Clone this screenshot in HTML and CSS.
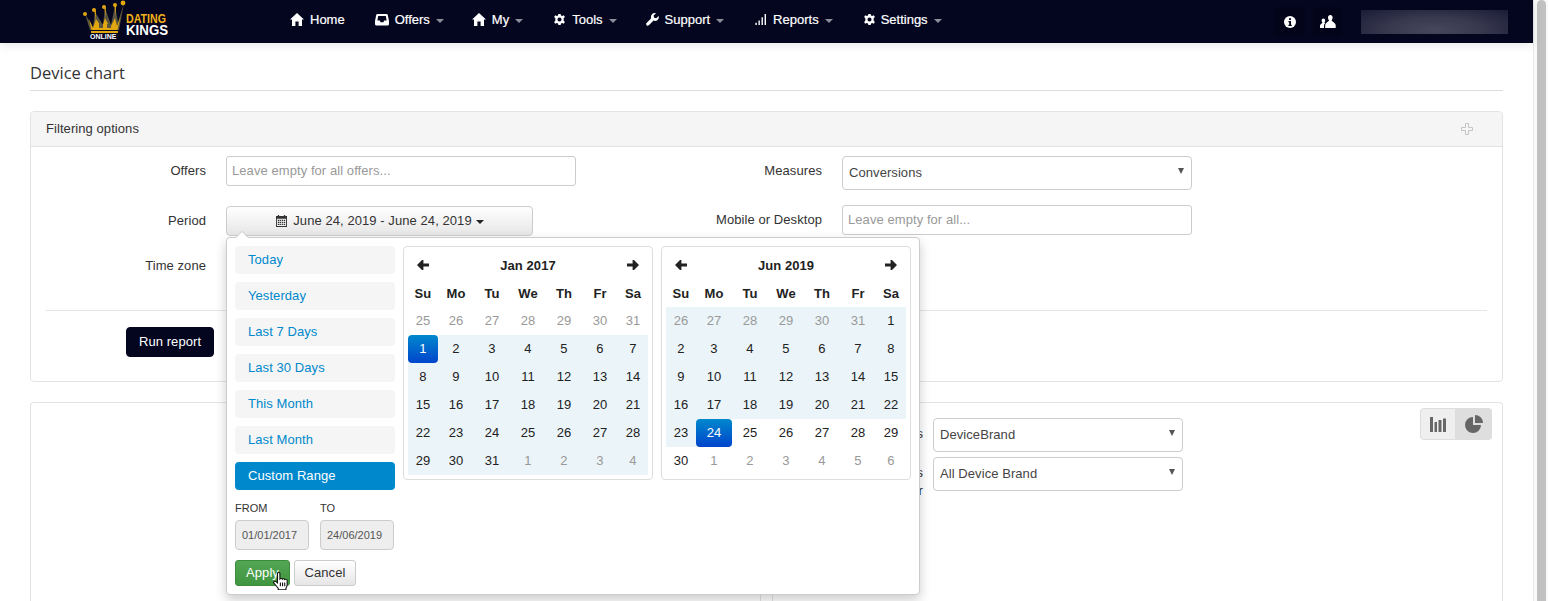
FILE: index.html
```html
<!DOCTYPE html>
<html lang="en">
<head>
<meta charset="utf-8">
<title>Device chart</title>
<link rel="stylesheet" href="styles.css">
</head>
<body>
<div class="window">
  <div class="main">
    <nav class="navbar">
      <a class="brand" href="#">
        <svg class="logo" viewBox="0 0 90 42" width="90" height="42">
          <path class="crown-dark" d="M3 14 L11 27 L13 12 L21 25 L23 8 L29 25 L33 6 L36 22 L42 3 L37 30 L8 30 Z"/>
          <path class="crown-gold" d="M7 19 L11 28 L14 19 L20 28 L23 18 L28 28 L33 18 L35 26 L38.5 17 L35.5 30 H9.5 Z"/>
          <path class="crown-dark" d="M17 24 H21 V28 H17 Z M25 24 H29 V28 H25 Z"/>
          <path class="crown-gold" d="M12.5 11 L14 11 L13.5 20 Z M22.4 8 L23.8 8 L23.4 17 Z M32.5 6 L34 6 L33.5 16 Z"/>
          <rect class="crown-gold" x="9" y="31" width="27" height="2"/>
          <circle class="crown-gold" cx="3" cy="14" r="2"/>
          <circle class="crown-gold" cx="12" cy="10" r="2"/>
          <circle class="crown-gold" cx="22" cy="7" r="2"/>
          <circle class="crown-gold" cx="33" cy="5" r="2"/>
          <circle class="crown-gold" cx="41" cy="3" r="2.4"/>
          <text class="logo-online" x="8" y="39">ONLINE</text>
          <text class="logo-dating" transform="translate(44 23) scale(.82 1)">DATING</text>
          <text class="logo-kings" transform="translate(44 35) scale(.95 1)">KINGS</text>
        </svg>
      </a>
      <ul class="menu">
        <li class="menu-item"><svg class="nav-icon" viewBox="0 0 14 13"><path d="M7 0 L14 6.6 L12 6.6 L12 13 L8.6 13 L8.6 8.5 L5.4 8.5 L5.4 13 L2 13 L2 6.6 L0 6.6 Z"/></svg>Home</li>
        <li class="menu-item"><svg class="nav-icon" viewBox="0 0 14 13"><path fill-rule="evenodd" d="M2.5 1 H11.5 Q12.5 1 12.8 2 L14 8 V11 Q14 12.5 12.5 12.5 H1.5 Q0 12.5 0 11 V8 L1.2 2 Q1.5 1 2.5 1 Z M3.2 3 L2.4 7.6 H4.8 L5.6 9.2 H8.4 L9.2 7.6 H11.6 L10.8 3 Z"/></svg>Offers<span class="caret"></span></li>
        <li class="menu-item menu-my"><svg class="nav-icon" viewBox="0 0 14 13"><path d="M7 0 L14 6.6 L12 6.6 L12 13 L8.6 13 L8.6 8.5 L5.4 8.5 L5.4 13 L2 13 L2 6.6 L0 6.6 Z"/></svg>My<span class="caret"></span></li>
        <li class="menu-item"><svg class="nav-icon nav-icon-19" viewBox="0 0 14 14"><path fill-rule="evenodd" d="M5.8 1 H8.2 L8.6 2.7 L10 3.3 L11.6 2.4 L12.8 4.4 L11.5 5.6 V8.4 L12.8 9.6 L11.6 11.6 L10 10.7 L8.6 11.3 L8.2 13 H5.8 L5.4 11.3 L4 10.7 L2.4 11.6 L1.2 9.6 L2.5 8.4 V5.6 L1.2 4.4 L2.4 2.4 L4 3.3 L5.4 2.7 Z M7 4.8 A2.2 2.2 0 1 0 7 9.2 A2.2 2.2 0 1 0 7 4.8 Z"/></svg>Tools<span class="caret"></span></li>
        <li class="menu-item menu-support"><svg class="nav-icon nav-icon-19" viewBox="0 0 14 14"><path d="M13.6 3.2 L11 5.6 L8.8 5 L8.2 2.8 L10.8 0.4 A4 4 0 0 0 5.6 5.6 L0.6 10.8 A1.7 1.7 0 0 0 3 13.2 L8.2 8.2 A4 4 0 0 0 13.6 3.2 Z"/></svg>Support<span class="caret"></span></li>
        <li class="menu-item"><svg class="nav-icon nav-icon-19" viewBox="0 0 14 14"><path d="M1.5 10.5 H3 V13 H1.5 Z M4.8 8 H6.3 V13 H4.8 Z M8.1 4.5 H9.6 V13 H8.1 Z M11.4 1 H12.9 V13 H11.4 Z"/></svg>Reports<span class="caret"></span></li>
        <li class="menu-item"><svg class="nav-icon nav-icon-18" viewBox="0 0 14 14"><path fill-rule="evenodd" d="M5.8 1 H8.2 L8.6 2.7 L10 3.3 L11.6 2.4 L12.8 4.4 L11.5 5.6 V8.4 L12.8 9.6 L11.6 11.6 L10 10.7 L8.6 11.3 L8.2 13 H5.8 L5.4 11.3 L4 10.7 L2.4 11.6 L1.2 9.6 L2.5 8.4 V5.6 L1.2 4.4 L2.4 2.4 L4 3.3 L5.4 2.7 Z M7 4.8 A2.2 2.2 0 1 0 7 9.2 A2.2 2.2 0 1 0 7 4.8 Z"/></svg>Settings<span class="caret"></span></li>
      </ul>
      <div class="nav-tools">
        <div class="tool-btn tool-info"><svg viewBox="0 0 12 12" width="12" height="12"><circle class="ico-white" cx="6" cy="6" r="6"/><path class="ico-dark" d="M5 2.2 H7 V4 H5 Z M4.4 5 H7 V8.8 H7.8 V10 H4.4 V8.8 H5.2 V6.2 H4.4 Z"/></svg></div>
        <div class="tool-btn tool-users"><svg viewBox="0 0 16 13" width="16" height="13"><path class="ico-white" d="M10.3 0 C11.8 0 12.6 1.2 12.6 2.6 C12.6 4 12 5 11.6 5.4 C12.5 6.8 15.7 8 15.7 10 V13 H5.2 V10 C5.2 8 8.2 6.8 9.1 5.4 C8.6 5 8 4 8 2.6 C8 1.2 8.9 0 10.3 0 Z M3.4 3.4 C4.5 3.4 5.2 4.2 5.2 5.4 C5.2 6.3 4.8 7 4.4 7.4 C4.7 7.8 5 8 5.3 8.2 C4.4 8.9 4 9.6 4 10.4 V13 H0 V10.4 C0 9.2 2 8.4 2.5 7.4 C2 7 1.6 6.3 1.6 5.4 C1.6 4.2 2.3 3.4 3.4 3.4 Z"/></svg></div>
        <div class="user-box"></div>
      </div>
    </nav>

    <div class="content">
      <h1 class="page-title">Device chart</h1>

      <section class="panel filter-panel">
        <header class="panel-head">
          <span>Filtering options</span>
          <svg class="plus" viewBox="0 0 12 12" width="12" height="12"><path d="M4.5 .5 H7.5 V4.5 H11.5 V7.5 H7.5 V11.5 H4.5 V7.5 H.5 V4.5 H4.5 Z"/></svg>
        </header>
        <div class="panel-body">
          <div class="filter-grid">
            <label class="field-label">Offers</label>
            <input class="text-input" type="text" placeholder="Leave empty for all offers...">
            <label class="field-label">Measures</label>
            <div class="select-box"><span>Conversions</span><i class="select-arrow"></i></div>

            <label class="field-label field-label-low">Period</label>
            <div class="period-field">
              <button class="date-btn" type="button">
                <svg class="cal-icon" viewBox="0 0 12 12" width="11" height="12" preserveAspectRatio="none"><path fill-rule="evenodd" d="M2 0 H3.4 V1 H8.6 V0 H10 V1 H12 V12 H0 V1 H2 Z M1 3.8 V11 H11 V3.8 Z M2 4.8 H3.4 V6 H2 Z M4 4.8 H5.4 V6 H4 Z M6.2 4.8 H7.6 V6 H6.2 Z M8.4 4.8 H10 V6 H8.4 Z M2 6.8 H3.4 V8 H2 Z M4 6.8 H5.4 V8 H4 Z M6.2 6.8 H7.6 V8 H6.2 Z M8.4 6.8 H10 V8 H8.4 Z M2 8.8 H3.4 V10 H2 Z M4 8.8 H5.4 V10 H4 Z M6.2 8.8 H7.6 V10 H6.2 Z M8.4 8.8 H10 V10 H8.4 Z"/></svg>
                June 24, 2019 - June 24, 2019<span class="caret caret-dark"></span>
              </button>

              <div class="picker">
                <div class="picker-side">
                  <ul class="ranges">
                    <li class="range">Today</li>
                    <li class="range">Yesterday</li>
                    <li class="range">Last 7 Days</li>
                    <li class="range">Last 30 Days</li>
                    <li class="range">This Month</li>
                    <li class="range">Last Month</li>
                    <li class="range range-active">Custom Range</li>
                  </ul>
                  <div class="range-inputs">
                    <div class="range-input"><label>FROM</label><input type="text" value="01/01/2017" disabled></div>
                    <div class="range-input"><label>TO</label><input type="text" value="24/06/2019" disabled></div>
                  </div>
                  <div class="picker-actions">
                    <button class="btn-apply" type="button">Apply</button>
                    <button class="btn-cancel" type="button">Cancel</button>
                    <svg class="hand" viewBox="0.5 0.2 12.4 18.6" width="15" height="18" preserveAspectRatio="none"><path d="M4.2 1.6 C4.2 .4 6.2 .4 6.2 1.6 V7.4 C6.6 6.7 8 6.7 8.2 7.6 C8.6 6.9 10 7 10.2 8 C10.8 7.4 12.2 7.7 12.2 8.8 V13.4 C12.2 15 11.6 15.8 11.2 17 V18.4 H4.8 V17 C3.8 15.6 2.6 13.8 1.2 11.6 C.4 10.4 1.8 9.2 3 10.2 L4.2 11.4 Z"/><path d="M6.6 11 V15 M8.4 11 V15 M10.2 11 V15"/></svg>
                  </div>
                </div>

                <div class="calendar">
                  <div class="cal-head">
                    <svg class="cal-arrow" viewBox="0 0 12 10" width="12" height="10"><path d="M0 5 L5 0 L6.4 0 V3.4 H12 V6.6 H6.4 V10 H5 Z"/></svg>
                    <span class="cal-title">Jan 2017</span>
                    <svg class="cal-arrow" viewBox="0 0 12 10" width="12" height="10"><path d="M12 5 L7 0 L5.6 0 V3.4 H0 V6.6 H5.6 V10 H7 Z"/></svg>
                  </div>
                  <div class="cal-grid">
                    <b>Su</b><b>Mo</b><b>Tu</b><b>We</b><b>Th</b><b>Fr</b><b>Sa</b>
                    <span class="off">25</span><span class="off">26</span><span class="off">27</span><span class="off">28</span><span class="off">29</span><span class="off">30</span><span class="off">31</span>
                    <span class="sel">1</span><span class="in">2</span><span class="in">3</span><span class="in">4</span><span class="in">5</span><span class="in">6</span><span class="in">7</span>
                    <span class="in">8</span><span class="in">9</span><span class="in">10</span><span class="in">11</span><span class="in">12</span><span class="in">13</span><span class="in">14</span>
                    <span class="in">15</span><span class="in">16</span><span class="in">17</span><span class="in">18</span><span class="in">19</span><span class="in">20</span><span class="in">21</span>
                    <span class="in">22</span><span class="in">23</span><span class="in">24</span><span class="in">25</span><span class="in">26</span><span class="in">27</span><span class="in">28</span>
                    <span class="in">29</span><span class="in">30</span><span class="in">31</span><span class="in off">1</span><span class="in off">2</span><span class="in off">3</span><span class="in off">4</span>
                  </div>
                </div>

                <div class="calendar">
                  <div class="cal-head">
                    <svg class="cal-arrow" viewBox="0 0 12 10" width="12" height="10"><path d="M0 5 L5 0 L6.4 0 V3.4 H12 V6.6 H6.4 V10 H5 Z"/></svg>
                    <span class="cal-title">Jun 2019</span>
                    <svg class="cal-arrow" viewBox="0 0 12 10" width="12" height="10"><path d="M12 5 L7 0 L5.6 0 V3.4 H0 V6.6 H5.6 V10 H7 Z"/></svg>
                  </div>
                  <div class="cal-grid">
                    <b>Su</b><b>Mo</b><b>Tu</b><b>We</b><b>Th</b><b>Fr</b><b>Sa</b>
                    <span class="in off">26</span><span class="in off">27</span><span class="in off">28</span><span class="in off">29</span><span class="in off">30</span><span class="in off">31</span><span class="in">1</span>
                    <span class="in">2</span><span class="in">3</span><span class="in">4</span><span class="in">5</span><span class="in">6</span><span class="in">7</span><span class="in">8</span>
                    <span class="in">9</span><span class="in">10</span><span class="in">11</span><span class="in">12</span><span class="in">13</span><span class="in">14</span><span class="in">15</span>
                    <span class="in">16</span><span class="in">17</span><span class="in">18</span><span class="in">19</span><span class="in">20</span><span class="in">21</span><span class="in">22</span>
                    <span class="in">23</span><span class="sel">24</span><span>25</span><span>26</span><span>27</span><span>28</span><span>29</span>
                    <span>30</span><span class="off">1</span><span class="off">2</span><span class="off">3</span><span class="off">4</span><span class="off">5</span><span class="off">6</span>
                  </div>
                </div>
              </div>
            </div>
            <label class="field-label">Mobile or Desktop</label>
            <input class="text-input" type="text" placeholder="Leave empty for all...">

            <label class="field-label">Time zone</label>
            <div class="select-box select-short"></div>
          </div>
          <hr class="divider">
          <div class="run-row"><button class="btn-run" type="button">Run report</button></div>
        </div>
      </section>

      <section class="panel chart-panel">
        <div class="chart-col"></div>
        <div class="side-col">
          <div class="side-form">
            <label class="side-label">Axis</label>
            <div class="select-box"><span>DeviceBrand</span><i class="select-arrow"></i></div>
            <label class="side-label">Axis<br>Filter</label>
            <div class="select-box"><span>All Device Brand</span><i class="select-arrow"></i></div>
          </div>
          <div class="toggle">
            <button class="toggle-btn" type="button"><svg viewBox="0 0 16 15" width="16" height="15"><path d="M0 0 H3 V15 H0 Z M4.5 5 H7 V15 H4.5 Z M8.5 3 H11.5 V15 H8.5 Z M13 1.5 H16 V15 H13 Z"/></svg></button>
            <button class="toggle-btn toggle-on" type="button"><svg viewBox="0 0 18 18" width="18" height="18"><path d="M8 2 A8 8 0 1 0 16 10 H8 Z M10 0 A8 8 0 0 1 18 8 H10 Z"/></svg></button>
          </div>
        </div>
      </section>
    </div>
  </div>
  <div class="scrollbar"><div class="thumb"></div></div>
</div>
</body>
</html>
```

FILE: styles.css
```css
* { box-sizing: border-box; }
html, body { margin: 0; height: 601px; overflow: hidden; background: #fff; }
body { font: 13px/18px "Liberation Sans", Arial, sans-serif; color: #333; letter-spacing: .07px; }
ul { list-style: none; margin: 0; padding: 0; }
button, input { font: inherit; letter-spacing: inherit; }

.window { display: flex; height: 601px; overflow: hidden; }
.main { width: 1533px; flex: none; }

.scrollbar { width: 15px; flex: none; background: #fafafa; border-left: 1px solid #e8e8e8; padding: 0 2px 0 3px; }
.thumb { width: 9px; height: 100%; background: #c1c1c1; border-radius: 5px 5px 0 0; }

/* navbar */
.navbar { height: 43px; background: #04051f; display: flex; align-items: center; box-shadow: 0 2px 10px rgba(0,0,0,.1); position: relative; z-index: 2; color: #fff; letter-spacing: 0; }
.brand { width: 275px; flex: none; height: 43px; padding-left: 82px; display: block; }
.logo { display: block; }
.crown-dark { fill: #5a5540; }
.crown-gold { fill: #e2a60e; }
.logo-online { font: bold 7px "Liberation Sans", sans-serif; fill: #fff; }
.logo-dating { font: bold 13px "Liberation Sans", sans-serif; fill: #f2b21a; }
.logo-kings { font: bold 14px "Liberation Sans", sans-serif; fill: #fff; }
.menu { display: flex; height: 43px; align-items: center; padding-bottom: 4px; }
.menu-item { display: flex; align-items: center; padding: 0 15px; color: #fff; white-space: nowrap; -webkit-text-stroke: .2px #fff; }
.menu-my { padding-left: 13px; }
.menu-support { padding-left: 14px; }
.nav-icon { width: 14px; height: 13px; margin-right: 6px; fill: #fff; flex: none; }
.nav-icon-19 { width: 13px; }
.nav-icon-18 { width: 13px; margin-right: 5px; }
.caret { display: inline-block; width: 0; height: 0; margin-left: 6px; margin-top: 2px; border-left: 4px solid transparent; border-right: 4px solid transparent; border-top: 4px solid #8d8d9c; }
.caret-dark { border-top-color: #222; margin-left: 4px; vertical-align: 2px; }
.nav-tools { margin-left: auto; display: flex; align-items: center; padding-right: 25px; }
.tool-btn { height: 29px; background: #03041a; display: flex; align-items: center; justify-content: center; }
.tool-info { width: 31px; margin-right: 8px; }
.tool-users { width: 29px; margin-right: 19px; }
.ico-white { fill: #fff; }
.ico-dark { fill: #04051f; }
.user-box { width: 147px; height: 24px; background: radial-gradient(ellipse at 50% 85%, #46465c 0%, #38384f 45%, #1a1b36 100%); }

/* content */
.content { padding: 0 30px; }
.page-title { margin: 0; height: 48px; padding-top: 19px; border-bottom: 1px solid #ddd; font: 400 16.5px/22px "Open Sans", sans-serif; letter-spacing: 0; color: #333; }
.panel { border: 1px solid #e3e3e3; border-radius: 4px; background: #fff; }
.filter-panel { margin-top: 20px; height: 271px; }
.panel-head { height: 35px; background: #f5f5f5; border-bottom: 1px solid #e3e3e3; border-radius: 4px 4px 0 0; display: flex; align-items: center; justify-content: space-between; padding: 0 29px 0 15px; }
.plus { fill: none; stroke: #c4c4c4; stroke-width: 1; }
.panel-body { padding-top: 9px; }

.filter-grid { display: grid; grid-template-columns: 175px 350px 226px 350px; column-gap: 20px; grid-template-rows: 34px 31px 30px; row-gap: 15px; align-items: start; }
.field-label { line-height: 30px; text-align: right; white-space: nowrap; }
.field-label-low { padding-top: 1px; }
.text-input { height: 30px; width: 100%; border: 1px solid #ccc; border-radius: 3px; padding: 0 5px 2px; color: #555; background: #fff; outline: none; }
.text-input::placeholder { color: #999; opacity: 1; }
.select-box { height: 34px; width: 100%; border: 1px solid #ccc; border-radius: 4px; padding: 0 6px; background: #fff; display: flex; align-items: center; justify-content: space-between; color: #444; }
.select-short { height: 30px; }
.select-arrow { width: 0; height: 0; border-left: 3.5px solid transparent; border-right: 3.5px solid transparent; border-top: 6px solid #555; margin-bottom: 4px; margin-right: 1px; }

.period-field { position: relative; padding-top: 1px; }
.date-btn { width: 307px; height: 30px; border: 1px solid #ccc; border-radius: 4px; background: linear-gradient(#fff, #e6e6e6); color: #333; display: flex; align-items: center; justify-content: center; padding: 0 0 0 1px; }
.cal-icon { fill: #333; margin-right: 6px; }

.divider { border: 0; border-top: 1px solid #e5e5e5; margin: 29px 15px 16px; }
.run-row { padding-left: 95px; }
.btn-run { width: 88px; height: 30px; background: #04051f; color: #fff; border: 1px solid #04051f; border-radius: 4px; padding: 0 0 1px; }

/* picker */
.picker { position: absolute; left: 0; top: 32px; width: 694px; height: 358px; z-index: 5; background: #fff; border: 1px solid #ccc; border-radius: 4px; box-shadow: 0 5px 12px rgba(0,0,0,.2); display: flex; padding: 8px 8px 0; }
.picker::before { content: ""; position: absolute; left: 8px; top: -7px; border-left: 7px solid transparent; border-right: 7px solid transparent; border-bottom: 7px solid #ccc; }
.picker::after { content: ""; position: absolute; left: 9px; top: -6px; border-left: 6px solid transparent; border-right: 6px solid transparent; border-bottom: 6px solid #fff; }
.picker-side { width: 160px; flex: none; margin-right: 8px; position: relative; }
.ranges { display: flex; flex-direction: column; gap: 8px; }
.range { height: 28px; line-height: 27px; padding-left: 13px; background: #f5f5f5; border-radius: 4px; color: #08c; }
.range-active { background: #08c; color: #fff; }
.range-inputs { display: flex; gap: 11px; margin-top: 10px; }
.range-input { width: 74px; font-size: 11px; letter-spacing: 0; }
.range-input label { display: block; line-height: 16px; color: #333; margin-bottom: 4px; }
.range-input input { width: 74px; height: 30px; border: 1px solid #ccc; border-radius: 4px; background: #eee; color: #555; font-size: 11px; padding: 0 6px; }
.picker-actions { display: flex; gap: 4px; margin-top: 10px; position: relative; }
.btn-apply { width: 55px; height: 26px; padding: 0; color: #fff; background: linear-gradient(#53a653, #419641); border: 1px solid #3c8c3c; border-radius: 3px; }
.btn-cancel { width: 62px; height: 26px; padding: 0; color: #333; background: linear-gradient(#fff, #e6e6e6); border: 1px solid #ccc; border-radius: 3px; }
.hand { position: absolute; left: 38px; top: 12px; fill: #fff; stroke: #111; stroke-width: .9; }

.calendar { width: 250px; height: 234px; flex: none; margin-right: 8px; border: 1px solid #ddd; border-radius: 4px; padding: 4px; }
.calendar:last-child { margin-right: 0; }
.cal-head { height: 28px; display: flex; align-items: center; justify-content: space-between; padding: 0 9px; }
.cal-title { font-weight: bold; color: #222; padding-top: 2px; }
.cal-arrow { fill: #222; }
.cal-grid { display: grid; grid-template-columns: 30px repeat(5, 36px) 30px; grid-auto-rows: 28px; text-align: center; line-height: 28px; color: #222; }
.cal-grid b { color: #222; line-height: 30px; }
.cal-grid .in { background: #ebf4f8; }
.cal-grid .off { color: #999; }
.cal-grid .sel { background: linear-gradient(#0088cc, #0044cc); color: #fff; border-radius: 4px; }

/* chart panel */
.chart-panel { margin-top: 20px; height: 300px; display: flex; border-bottom: 0; }
.chart-col { width: 730px; flex: none; border-right: 1px solid #e3e3e3; }
.side-col { flex: 1; margin-left: 11px; border-left: 1px solid #e3e3e3; display: flex; justify-content: space-between; align-items: flex-start; }
.side-form { display: grid; grid-template-columns: 150px 250px; column-gap: 10px; grid-auto-rows: 34px; row-gap: 5px; margin-top: 15px; }
.side-label { text-align: right; padding-top: 7px; line-height: 18px; white-space: nowrap; }
.toggle { display: flex; margin: 5px 10px 0 0; }
.toggle-btn { height: 32px; width: 36px; background: #efefef; border: 1px solid #ddd; padding: 0; display: flex; align-items: center; justify-content: center; border-radius: 4px 0 0 4px; }
.toggle-on { background: #dedede; border-left: 0; border-radius: 0 4px 4px 0; }
.toggle-btn svg { fill: #666; }
```
